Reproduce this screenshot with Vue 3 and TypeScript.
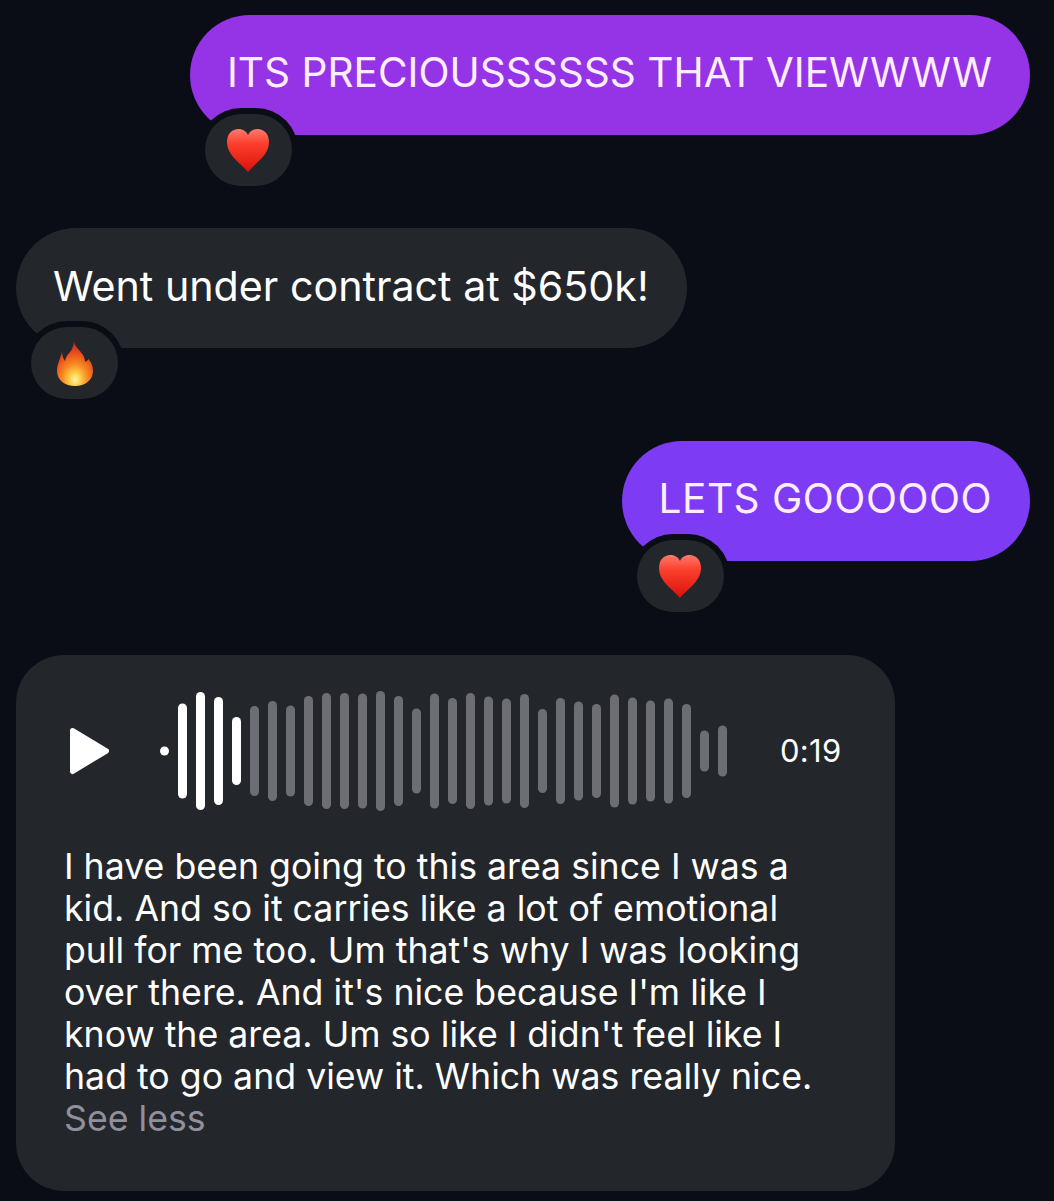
<script setup lang="ts">
interface Bar {
  x: number
  h: number
  played: boolean
}

const heights = [95, 118, 108, 68, 90, 100, 91, 110, 116, 116, 115, 120, 110, 85, 115, 106, 116, 109, 105, 114, 84, 106, 99, 94, 113, 107, 101, 105, 94, 41, 51]
const bars: Bar[] = heights.map((h, i) => ({ x: 18 + i * 18, h, played: i < 4 }))

const transcript = [
  'I have been going to this area since I was a',
  'kid. And so it carries like a lot of emotional',
  "pull for me too. Um that's why I was looking",
  "over there. And it's nice because I'm like I",
  "know the area. Um so like I didn't feel like I",
  'had to go and view it. Which was really nice.',
]
</script>

<template>
  <div class="thread">
    <div class="row mine first">
      <div class="bubble purple">
        ITS PRECIOUSSSSSS THAT VIEWWWW
        <span class="reaction">
          <svg width="42" height="43" viewBox="0 0 42 43">
            <use href="#heart" />
          </svg>
        </span>
      </div>
    </div>

    <div class="row theirs second">
      <div class="bubble gray">
        Went under contract at $650k!
        <span class="reaction">
          <svg width="36" height="45" viewBox="0 0 36 45">
            <defs>
              <radialGradient id="flame" cx="50%" cy="86%" r="78%">
                <stop offset="0" stop-color="#fff6b0" />
                <stop offset="0.18" stop-color="#ffd24a" />
                <stop offset="0.45" stop-color="#f98a22" />
                <stop offset="0.75" stop-color="#e9501c" />
                <stop offset="1" stop-color="#c92f1a" />
              </radialGradient>
            </defs>
            <path fill="url(#flame)" d="M17 0C17 5 23 9 26 14C27 16 28 18 28 21C30 20 31 19 31.5 18C34 21 36 25 36 30C36 39 28 45 18 45C8 45 0 39 0 30C0 23 3 19 5 11C5.5 15 6 17 8 20C9 14 13 12 15 8C16 5 17 3 17 0z" />
          </svg>
        </span>
      </div>
    </div>

    <div class="row mine third">
      <div class="bubble violet">
        LETS GOOOOOO
        <span class="reaction">
          <svg width="42" height="43" viewBox="0 0 42 43">
            <use href="#heart" />
          </svg>
        </span>
      </div>
    </div>

    <div class="voice">
      <div class="player">
        <svg class="play" width="39" height="48" viewBox="0 0 39 48">
          <path fill="#fff" stroke="#fff" stroke-width="5" stroke-linejoin="round" d="M2.5 3.5L36.5 24L2.5 44.5z" />
        </svg>
        <svg class="wave" width="576" height="120" viewBox="0 0 576 120">
          <circle cx="4.5" cy="60" r="4.5" fill="#fff" />
          <rect
            v-for="bar in bars"
            :key="bar.x"
            :x="bar.x"
            :y="60 - bar.h / 2"
            width="9"
            :height="bar.h"
            rx="4.5"
            :fill="bar.played ? '#fff' : '#6c6e73'"
          />
        </svg>
        <span class="time">0:19</span>
      </div>
      <p class="transcript">
        <span v-for="line in transcript" :key="line" class="line">{{ line }}</span>
        <span class="line less">See less</span>
      </p>
    </div>

    <svg width="0" height="0" class="defs">
      <defs>
        <linearGradient id="heartFill" x1="0" y1="0" x2="0" y2="1">
          <stop offset="0" stop-color="#ff7a6c" />
          <stop offset="0.35" stop-color="#fb3f2c" />
          <stop offset="1" stop-color="#dc100a" />
        </linearGradient>
        <path id="heart" fill="url(#heartFill)" d="M21 43C15 35 0 27 0 13C0 5 5 0 11.5 0C16 0 19.5 2.5 21 6C22.5 2.5 26 0 30.5 0C37 0 42 5 42 13C42 27 27 35 21 43z" />
      </defs>
    </svg>
  </div>
</template>

<style>
html,
body {
  background: #0a0d15;
}
</style>

<style scoped>
.thread {
  box-sizing: border-box;
  width: 1054px;
  height: 1201px;
  padding: 15px 24px 0 16px;
  overflow: hidden;
  background: #0a0d15;
  font-family: Inter, "Liberation Sans", sans-serif;
  color: #fff;
}

.row {
  display: flex;
}

.mine {
  justify-content: flex-end;
}

.second,
.third {
  margin-top: 93px;
}

.bubble {
  position: relative;
  box-sizing: border-box;
  display: flex;
  align-items: center;
  height: 120px;
  padding: 0 38px 5px 37px;
  border-radius: 60px;
  font-size: 40.6px;
  white-space: nowrap;
}

.purple {
  background: #9534e6;
  color: #fceeff;
}

.violet {
  background: #7e3bf4;
  color: #fceeff;
  letter-spacing: 0.5px;
}

.gray {
  background: #23262b;
  font-size: 41.2px;
}

.reaction {
  position: absolute;
  top: 99px;
  left: 15px;
  display: flex;
  align-items: center;
  justify-content: center;
  width: 87px;
  height: 72px;
  border-radius: 36px;
  background: #23262b;
  box-shadow: 0 0 0 6px #0a0d15;
}

.voice {
  box-sizing: border-box;
  width: 879px;
  height: 536px;
  margin-top: 94px;
  padding: 36px 0 0 49px;
  border-radius: 48px;
  background: #23262b;
}

.player {
  display: flex;
  align-items: center;
  height: 120px;
}

.play {
  flex: none;
  margin-left: 5px;
}

.wave {
  flex: none;
  margin-left: 51px;
}

.time {
  margin-left: 44px;
  padding-bottom: 2px;
  font-size: 31px;
  letter-spacing: 0.3px;
}

.transcript {
  margin: 34px 0 0 -1px;
  font-size: 35.7px;
  line-height: 42px;
}

.line {
  display: block;
  white-space: nowrap;
}

.less {
  color: #8f909c;
}

.defs {
  position: absolute;
}
</style>
